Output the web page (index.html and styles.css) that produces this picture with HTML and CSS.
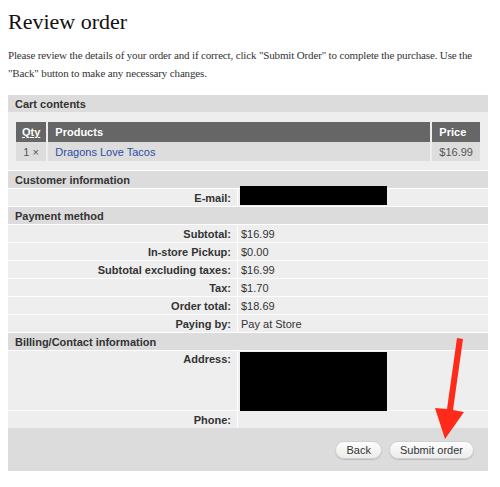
FILE: index.html
```html
<!DOCTYPE html>
<html lang="en">
<head>
  <meta charset="UTF-8">
  <meta name="viewport" content="width=device-width, initial-scale=1.0">
  <title>Review order</title>
  <link rel="stylesheet" href="styles.css">
</head>
<body>
  <h1>Review order</h1>
  <p class="intro">Please review the details of your order and if correct, click "Submit Order" to complete the purchase. Use the "Back" button to make any necessary changes.</p>

  <table class="review">
    <tr><th colspan="2" class="section">Cart contents</th></tr>
    <tr>
      <td colspan="2" class="cart-cell">
        <table class="cart">
          <tr>
            <th class="qty"><u>Qty</u></th>
            <th class="product">Products</th>
            <th class="price">Price</th>
          </tr>
          <tr>
            <td class="qty">1 ×</td>
            <td class="product"><a href="#">Dragons Love Tacos</a></td>
            <td class="price">$16.99</td>
          </tr>
        </table>
      </td>
    </tr>

    <tr><th colspan="2" class="section">Customer information</th></tr>
    <tr>
      <td class="label">E-mail:</td>
      <td class="value"><span class="redact email-redact"></span></td>
    </tr>

    <tr><th colspan="2" class="section">Payment method</th></tr>
    <tr><td class="label">Subtotal:</td><td class="value">$16.99</td></tr>
    <tr><td class="label">In-store Pickup:</td><td class="value">$0.00</td></tr>
    <tr><td class="label">Subtotal excluding taxes:</td><td class="value">$16.99</td></tr>
    <tr><td class="label">Tax:</td><td class="value">$1.70</td></tr>
    <tr><td class="label">Order total:</td><td class="value">$18.69</td></tr>
    <tr><td class="label">Paying by:</td><td class="value">Pay at Store</td></tr>

    <tr><th colspan="2" class="section">Billing/Contact information</th></tr>
    <tr class="address-row">
      <td class="label">Address:</td>
      <td class="value"><span class="redact address-redact"></span></td>
    </tr>
    <tr><td class="label">Phone:</td><td class="value"></td></tr>

    <tr>
      <td colspan="2" class="actions">
        <button class="btn">Back</button>
        <button class="btn">Submit order</button>
      </td>
    </tr>
  </table>

  <svg class="arrow" width="40" height="110" viewBox="0 0 40 110">
    <polygon points="25,0 31,1 21,72 32,74 13,101 3,70 15,71" fill="#ff2a1a"/>
  </svg>
</body>
</html>
```

FILE: styles.css
```css
body {
  margin: 8px;
  font-family: "Liberation Serif", serif;
  color: #222;
  background: #fff;
  position: relative;
}
h1 {
  font-weight: normal;
  font-size: 22px;
  line-height: 28px;
  margin: 0;
  color: #111;
}
.intro {
  font-size: 11px;
  letter-spacing: -0.15px;
  line-height: 18px;
  margin: 10px 0 12px;
  color: #333;
}
.review {
  width: 480px;
  border-collapse: collapse;
  font-family: "Liberation Sans", sans-serif;
  font-size: 11px;
  color: #333;
}
.review td, .review th {
  padding: 0;
}
.section {
  background: #dcdcdc;
  text-align: left;
  font-weight: bold;
  height: 17px;
  padding: 0 7px !important;
  border-top: 1px solid #fff;
}
.cart-cell {
  background: #eee;
  padding: 10px 8px 9px !important;
}
.cart {
  width: 100%;
  border-collapse: collapse;
}
.cart th {
  background: #666;
  color: #fff;
  font-weight: bold;
  text-align: left;
  height: 20px;
  padding: 0 7px;
  border-left: 2px solid #eee;
}
.cart th:first-child { border-left: 0; }
.cart td {
  background: #ddd;
  color: #555;
  height: 19px;
  padding: 0 7px;
  border-left: 2px solid #eee;
}
.cart td:first-child { border-left: 0; }
.cart .qty {
  width: 17px;
  padding: 0 6px;
  text-align: center;
}
.cart .price {
  width: 30px;
}
.cart a {
  color: #2b4ea2;
  text-decoration: none;
}
.label, .value {
  background: #eee;
  height: 17px;
  border-top: 1px solid #fff;
}
.label {
  width: 223px;
  text-align: right;
  font-weight: bold;
  padding-right: 6px !important;
}
.value {
  padding-left: 3px !important;
  border-left: 1px solid #fff;
  position: relative;
}
.address-row td {
  height: 57px;
  vertical-align: top;
  padding-top: 2px !important;
}
.redact {
  position: absolute;
  left: 2px;
  width: 147px;
  background: #000;
}
.email-redact {
  top: -3px;
  height: 19px;
}
.address-redact {
  top: 1px;
  height: 74px;
}
.actions {
  background: #dcdcdc;
  height: 43px;
  text-align: right;
  padding-right: 14px !important;
}
.btn {
  font-family: "Liberation Sans", sans-serif;
  font-size: 11px;
  color: #333;
  height: 18px;
  padding: 0 10px;
  margin-left: 4px;
  border: 1px solid #d0d0d0;
  border-radius: 9px;
  background: linear-gradient(#fdfdfd, #ececec);
  box-shadow: 0 1px 1px rgba(0,0,0,0.15);
}
.arrow {
  position: absolute;
  left: 424px;
  top: 330px;
}
```
